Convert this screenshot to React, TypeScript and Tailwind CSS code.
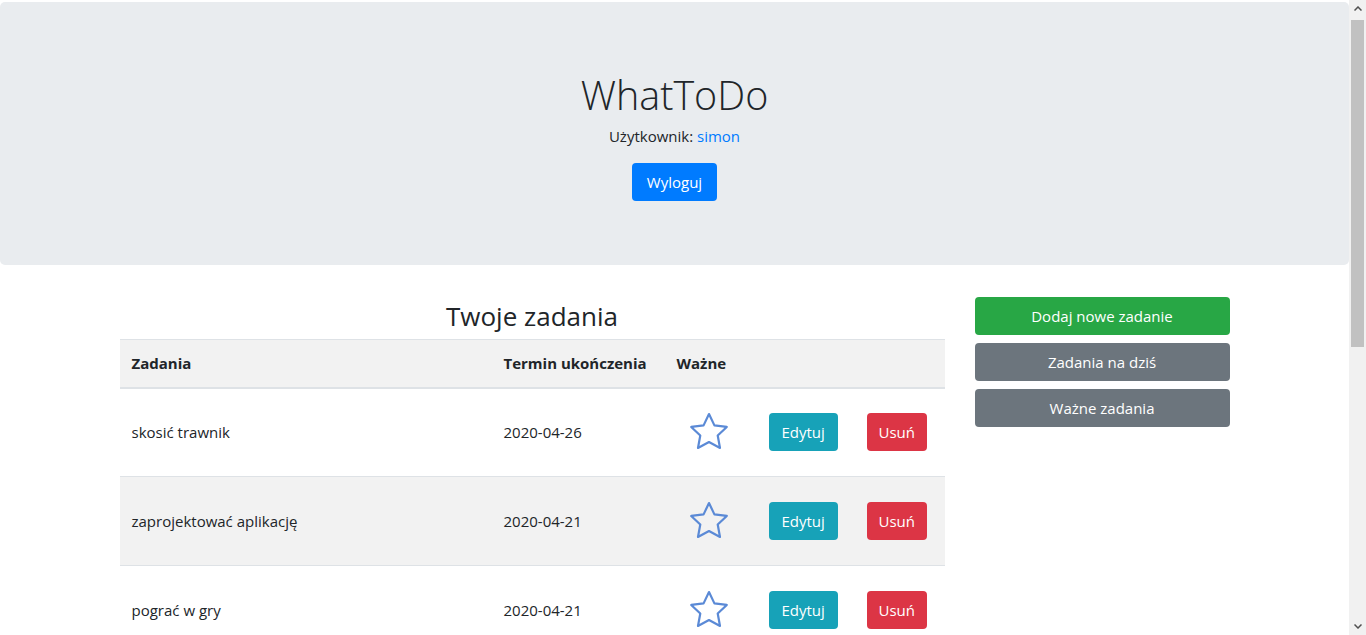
import React from 'react';

type Task = { name: string; due: string };

const tasks: Task[] = [
  { name: 'skosić trawnik', due: '2020-04-26' },
  { name: 'zaprojektować aplikację', due: '2020-04-21' },
  { name: 'pograć w gry', due: '2020-04-21' },
];

const font = { fontFamily: '"Open Sans", "Noto Sans", sans-serif' };

const StarIcon = () => (
  <svg width="44" height="44" viewBox="0 0 24 24" fill="none" stroke="#5b8ad6" strokeWidth={1.2} strokeLinejoin="round">
    <path d="M12 2.2l2.95 6.2 6.75.85-4.95 4.7 1.25 6.75L12 17.45 5.99 20.7l1.26-6.75-4.95-4.7 6.75-.85z" />
  </svg>
);

// udawany pasek przewijania z prawej strony
const ScrollBar = () => (
  <div className="flex w-[17px] flex-col bg-[#f1f1f1]">
    <div className="flex h-[17px] items-center justify-center">
      <svg width="8" height="5" viewBox="0 0 8 5">
        <path d="M0.5 4.5L4 1l3.5 3.5" fill="none" stroke="#505050" strokeWidth={1.5} />
      </svg>
    </div>
    <div className="mx-[2px] mt-[3px] h-[327px] bg-[#c1c1c1]" />
    <div className="flex-1" />
    <div className="flex h-[17px] items-center justify-center">
      <svg width="8" height="5" viewBox="0 0 8 5">
        <path d="M0.5 0.5L4 4l3.5-3.5" fill="none" stroke="#505050" strokeWidth={1.5} />
      </svg>
    </div>
  </div>
);

export default function App() {
  return (
    <div className="flex h-screen overflow-hidden bg-white text-[#212529]" style={font}>
      <div className="flex-1 overflow-hidden pt-[2px]">
        <div className="rounded-[5px] bg-[#e9ecef] px-8 pt-[64px] pb-[64px] text-center">
          <h1 className="text-[39.5px] leading-[58px] font-light">WhatToDo</h1>
          <p className="mb-[15px] text-[15px] leading-6">
            Użytkownik: <span className="text-[#007bff]">simon</span>
          </p>
          <button className="h-[38px] rounded-[4px] bg-[#007bff] px-[15px] text-[15px] text-white">Wyloguj</button>
        </div>

        <div className="mx-auto mt-[32px] flex w-[1140px] px-[15px]">
          <div className="w-[825px]">
            <h2 className="mb-[4px] text-center text-[26px] leading-[38px]">Twoje zadania</h2>
            <table className="w-full border-collapse text-left text-[15px]">
              <thead>
                <tr className="h-[48px] border-t border-b-2 border-[#dee2e6] bg-[#f2f2f2]">
                  <th className="w-[372px] px-3 font-bold">Zadania</th>
                  <th className="w-[173px] px-3 font-bold">Termin ukończenia</th>
                  <th className="w-[92px] px-3 font-bold">Ważne</th>
                  <th className="w-[98px] px-3" />
                  <th className="px-3" />
                </tr>
              </thead>
              <tbody>
                {tasks.map((t, i) => (
                  <tr key={t.name} className={`h-[89px] border-t border-[#dee2e6] ${i % 2 === 1 ? 'bg-[#f2f2f2]' : ''}`}>
                    <td className="px-3">{t.name}</td>
                    <td className="px-3">{t.due}</td>
                    <td className="px-3">
                      <div className="flex justify-center pr-[4px]">
                        <StarIcon />
                      </div>
                    </td>
                    <td className="px-3">
                      <button className="h-[38px] rounded-[4px] bg-[#17a2b8] px-[13px] text-white">Edytuj</button>
                    </td>
                    <td className="px-3">
                      <button className="h-[38px] rounded-[4px] bg-[#dc3545] px-[12px] text-white">Usuń</button>
                    </td>
                  </tr>
                ))}
              </tbody>
            </table>
          </div>
          <div className="ml-[30px] flex w-[255px] flex-col gap-[8px] text-[15px]">
            <button className="h-[38px] rounded-[4px] bg-[#28a745] text-white">Dodaj nowe zadanie</button>
            <button className="h-[38px] rounded-[4px] bg-[#6c757d] text-white">Zadania na dziś</button>
            <button className="h-[38px] rounded-[4px] bg-[#6c757d] text-white">Ważne zadania</button>
          </div>
        </div>
      </div>
      <ScrollBar />
    </div>
  );
}
